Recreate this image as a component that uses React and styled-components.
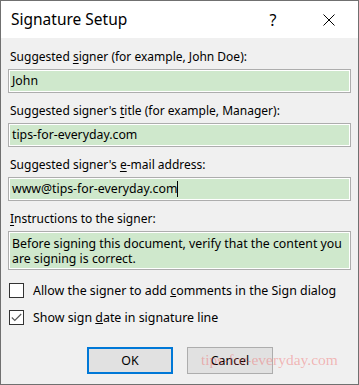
import React from "react";
import styled, { createGlobalStyle } from "styled-components";

const Global = createGlobalStyle`
  html, body { margin: 0; padding: 0; background: #fff; }
  body { font-family: "Noto Sans", "Open Sans", sans-serif; color: #000; }
`;

const Dialog = styled.div`
  position: relative;
  width: 359px;
  height: 385px;
  box-sizing: border-box;
  border: 1px solid #707070;
  background: #f0f0f0;
  display: flex;
  flex-direction: column;
  overflow: hidden;
`;

const TitleBar = styled.div`
  height: 37px;
  background: #fff;
  display: flex;
  align-items: center;
  padding-left: 10px;
`;

const Title = styled.div`
  flex: 1;
  font-size: 15.5px;
  padding-bottom: 1px;
`;

const TitleButton = styled.div`
  width: 44px;
  height: 37px;
  display: flex;
  align-items: center;
  justify-content: center;
  font-size: 16px;
  margin-right: ${p => p.mr || 0}px;
`;

const Body = styled.div`
  padding: 11px 7px 0;
  display: flex;
  flex-direction: column;
`;

const Label = styled.div`
  font-size: 12px;
  line-height: 16px;
  padding-left: 2px;
  margin: ${p => (p.first ? 0 : 10)}px 0 4px;
  u { text-underline-offset: 2px; }
`;

const Field = styled.div`
  box-sizing: border-box;
  height: ${p => p.h || 24}px;
  border: 1px solid #adadad;
  box-shadow: inset 0 0 0 1px #fff;
  background: #cfe8cc;
  padding: ${p => (p.multi ? "4px 3px" : "0 3px")};
  display: flex;
  align-items: ${p => (p.multi ? "flex-start" : "center")};
  font-size: 12.3px;
  line-height: ${p => (p.multi ? "15px" : "16px")};
`;

const Caret = styled.span`
  display: inline-block;
  width: 1px;
  height: 16px;
  background: #000;
  vertical-align: middle;
`;

const Checks = styled.div`
  margin-top: 13px;
  display: flex;
  flex-direction: column;
  gap: 12px;
`;

const CheckRow = styled.div`
  display: flex;
  align-items: center;
  gap: 9px;
  padding-left: 1px;
  font-size: 12.4px;
  line-height: 15px;
`;

const Box = styled.span`
  box-sizing: border-box;
  width: 15px;
  height: 15px;
  border: 1px solid #333;
  background: #fff;
  display: flex;
  align-items: center;
  justify-content: center;
`;

const Buttons = styled.div`
  margin-top: 22px;
  display: flex;
  gap: 14px;
  padding-left: 79px;
`;

const Button = styled.div`
  box-sizing: border-box;
  width: 86px;
  height: 27px;
  background: #e1e1e1;
  border: ${p => (p.primary ? "2px solid #0078d7" : "1px solid #adadad")};
  display: flex;
  align-items: center;
  justify-content: center;
  font-size: 12.4px;
`;

const Watermark = styled.div`
  position: absolute;
  left: 200px;
  top: 350px;
  font-family: "Liberation Serif", serif;
  font-size: 15.5px;
  color: rgba(240, 90, 90, 0.4);
  pointer-events: none;
`;

export default function App() {
  return (
    <>
      <Global />
      <Dialog>
        <TitleBar>
          <Title>Signature Setup</Title>
          <TitleButton mr={12}>?</TitleButton>
          <TitleButton mr={7}>
            <svg width="12" height="12" viewBox="0 0 12 12">
              <path d="M0.5 0.5 L11.5 11.5 M11.5 0.5 L0.5 11.5" stroke="#000" strokeWidth="1" />
            </svg>
          </TitleButton>
        </TitleBar>
        <Body>
          <Label first>Suggested <u>s</u>igner (for example, John Doe):</Label>
          <Field>John</Field>
          <Label>Suggested signer's <u>t</u>itle (for example, Manager):</Label>
          <Field>tips-for-everyday.com</Field>
          <Label>Suggested signer's <u>e</u>-mail address:</Label>
          <Field>www@tips-for-everyday.com<Caret /></Field>
          <Label><u>I</u>nstructions to the signer:</Label>
          <Field multi h={39}>
            Before signing this document, verify that the content you are signing is correct.
          </Field>
          <Checks>
            <CheckRow>
              <Box />
              <span>Allow the signer to add <u>c</u>omments in the Sign dialog</span>
            </CheckRow>
            <CheckRow>
              <Box>
                <svg width="11" height="9" viewBox="0 0 11 9">
                  <path d="M0.8 4.5 L3.8 7.5 L10.2 1" stroke="#555" strokeWidth="1.1" fill="none" />
                </svg>
              </Box>
              <span>Show sign <u>d</u>ate in signature line</span>
            </CheckRow>
          </Checks>
          <Buttons>
            <Button primary>OK</Button>
            <Button>Cancel</Button>
          </Buttons>
        </Body>
        <Watermark>tips-for-everyday.com</Watermark>
      </Dialog>
    </>
  );
}
